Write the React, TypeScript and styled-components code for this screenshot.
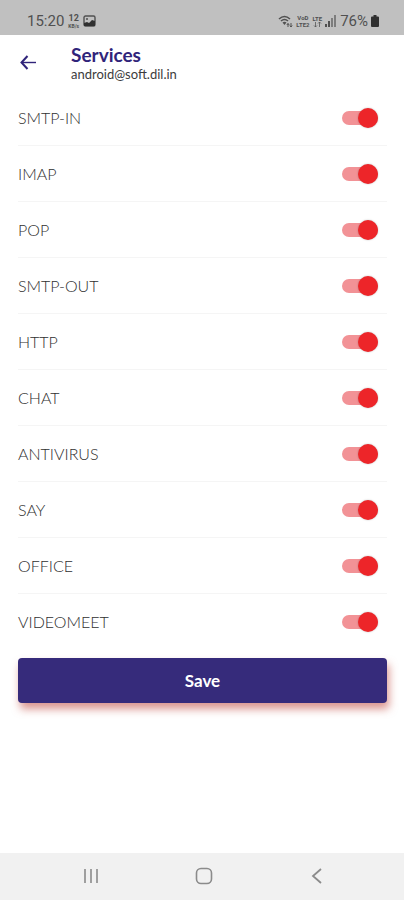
import React, { useState } from "react";
import styled, { createGlobalStyle } from "styled-components";

const GlobalStyle = createGlobalStyle`
  * { box-sizing: border-box; }
  body {
    margin: 0;
    background: #fff;
    font-family: Lato, "Open Sans", sans-serif;
  }
`;

const Screen = styled.div`
  min-height: 100vh;
  display: flex;
  flex-direction: column;
`;

const StatusBar = styled.div`
  height: 35px;
  padding: 7px 25px 0 27px;
  display: flex;
  align-items: center;
  justify-content: space-between;
  background: #c0c0c0;
  color: #505050;
  font-family: Roboto, sans-serif;
  font-size: 15px;
  line-height: 20px;
`;

const StatusGroup = styled.div<{ $gap: number }>`
  display: flex;
  align-items: center;
  gap: ${(p) => p.$gap}px;
`;

const Stacked = styled.span<{ $size: number; $line: number }>`
  display: flex;
  flex-direction: column;
  align-items: center;
  font-size: ${(p) => p.$size}px;
  line-height: ${(p) => p.$line}px;
  font-weight: 700;
`;

const Unit = styled.span`
  font-size: 5px;
  line-height: 6px;
`;

const Header = styled.header`
  height: 55px;
  padding: 0 18px;
  display: flex;
  align-items: center;
  gap: 33px;
`;

const BackButton = styled.button`
  width: 20px;
  height: 20px;
  padding: 0;
  border: 0;
  background: none;
  color: #30247a;
  display: flex;
`;

const Title = styled.h1`
  margin: 0;
  font-size: 19px;
  line-height: 22px;
  font-weight: 700;
  color: #30247a;
`;

const Account = styled.p`
  margin: 0;
  font-size: 13px;
  line-height: 16px;
  color: #3c3c3c;
`;

const Form = styled.form`
  flex: 1;
  padding: 0 17px 24px 18px;
`;

const List = styled.ul`
  margin: 0 0 8px;
  padding: 0;
  list-style: none;
`;

const Row = styled.li`
  height: 56px;
  border-bottom: 1px solid #f5f5f5;

  &:last-child {
    border-bottom-color: transparent;
  }
`;

const RowLabel = styled.label`
  height: 100%;
  padding-right: 9px;
  display: flex;
  align-items: center;
  justify-content: space-between;
  font-size: 16px;
  line-height: 20px;
  font-weight: 300;
  color: #303030;
`;

const Switch = styled.input`
  appearance: none;
  width: 36px;
  height: 14px;
  margin: 0;
  display: flex;
  align-items: center;
  justify-content: flex-start;
  border-radius: 7px;
  background: #c4c4c4;

  &::before {
    content: "";
    flex: none;
    width: 20px;
    height: 20px;
    border-radius: 50%;
    background: #fafafa;
    box-shadow: 0 0 2px rgba(0, 0, 0, 0.25);
  }

  &:checked {
    justify-content: flex-end;
    background: #f29296;
  }

  &:checked::before {
    background: #ed2529;
  }
`;

const SaveButton = styled.button`
  width: 100%;
  height: 45px;
  padding: 0;
  border: 0;
  border-radius: 4px;
  background: #362b7b;
  box-shadow: 2px 6px 8px rgba(190, 64, 52, 0.55);
  color: #fff;
  font-family: inherit;
  font-size: 17px;
  line-height: 20px;
  font-weight: 700;
`;

const NavBar = styled.nav`
  height: 47px;
  padding: 0 31px 2px 34px;
  display: grid;
  grid-template-columns: repeat(3, 1fr);
  background: #f1f1f1;
`;

const NavButton = styled.button`
  padding: 0;
  border: 0;
  background: none;
  color: #8b8b8b;
  display: flex;
  align-items: center;
  justify-content: center;
`;

const services = [
  "SMTP-IN", "IMAP", "POP", "SMTP-OUT", "HTTP",
  "CHAT", "ANTIVIRUS", "SAY", "OFFICE", "VIDEOMEET",
];

const PictureIcon = () => (
  <svg width="13" height="12" viewBox="0 0 13 12" aria-hidden="true">
    <rect x="1" y="1" width="11" height="10" rx="1.5" fill="none" stroke="currentColor" strokeWidth="1.4" />
    <path d="M1 8l3-1 2 1L9 5l3 1v5H1z" fill="#303030" />
    <circle cx="4" cy="4" r="1" fill="currentColor" />
  </svg>
);

const WifiIcon = () => (
  <svg width="15" height="13" viewBox="0 0 15 13" aria-hidden="true" fill="none" stroke="currentColor">
    <path d="M1 4Q6.500 -1 12 4M3 6Q6.500 3 10 6" strokeWidth="1.600" />
    <path d="M4.500 7.500Q6.500 6 8.500 7.500L6.500 10z" fill="currentColor" stroke="none" />
    <path d="M10 12V8.500M8.800 10L10 8.500l1.200 1.500M13 8v4M11.800 10.500L13 12l1.200-1.500" strokeWidth="1" />
  </svg>
);

const DataArrows = () => (
  <svg width="9" height="6" viewBox="0 0 9 6" aria-hidden="true" fill="none" stroke="currentColor">
    <path d="M2.500 0v5M1 3.500L2.500 5 4 3.500M6.500 5V0M5 1.500L6.500 0 8 1.500" opacity=".75" />
  </svg>
);

const SignalIcon = () => (
  <svg width="12" height="12" viewBox="0 0 12 12" aria-hidden="true" fill="currentColor">
    <path d="M0 9h2v3H0zM3 6h2v6H3z" />
    <path d="M6 3h2v9H6zM9 0h2v12H9z" opacity=".6" />
  </svg>
);

const BatteryIcon = () => (
  <svg width="8" height="12" viewBox="0 0 8 12" aria-hidden="true" fill="#303030">
    <path d="M2.500 0h3v1.500H7a1 1 0 0 1 1 1V11a1 1 0 0 1-1 1H1a1 1 0 0 1-1-1V2.500a1 1 0 0 1 1-1h1.500z" />
  </svg>
);

export default function App() {
  const [enabled, setEnabled] = useState<Record<string, boolean>>(
    () => Object.fromEntries(services.map((name) => [name, true])),
  );

  return (
    <Screen>
      <GlobalStyle />
      <StatusBar>
        <StatusGroup $gap={4}>
          <span>15:20</span>
          <Stacked $size={9} $line={10}>
            <span>12</span>
            <Unit>KB/s</Unit>
          </Stacked>
          <PictureIcon />
        </StatusGroup>
        <StatusGroup $gap={3}>
          <WifiIcon />
          <Stacked $size={6} $line={7}>
            <span>VoD</span>
            <span>LTE2</span>
          </Stacked>
          <Stacked $size={6} $line={7}>
            <span>LTE</span>
            <DataArrows />
          </Stacked>
          <SignalIcon />
          <span>76%</span>
          <BatteryIcon />
        </StatusGroup>
      </StatusBar>
      <Header>
        <BackButton type="button" aria-label="Back">
          <svg width="20" height="20" viewBox="0 0 20 20" fill="none" stroke="currentColor">
            <path d="M9.500 3L3.500 9.500l6 6.500" strokeWidth="2" />
            <path d="M4 9.500h14" strokeWidth="1.400" />
          </svg>
        </BackButton>
        <div>
          <Title>Services</Title>
          <Account>android@soft.dil.in</Account>
        </div>
      </Header>
      <Form onSubmit={(event) => event.preventDefault()}>
        <List>
          {services.map((name) => (
            <Row key={name}>
              <RowLabel>
                {name}
                <Switch
                  type="checkbox"
                  role="switch"
                  checked={enabled[name]}
                  onChange={(event) => setEnabled({ ...enabled, [name]: event.target.checked })}
                />
              </RowLabel>
            </Row>
          ))}
        </List>
        <SaveButton type="submit">Save</SaveButton>
      </Form>
      <NavBar>
        <NavButton type="button" aria-label="Recent apps">
          <svg width="18" height="18" viewBox="0 0 18 18" fill="none" stroke="currentColor" strokeWidth="1.600">
            <path d="M3 2v14M9 2v14M15 2v14" />
          </svg>
        </NavButton>
        <NavButton type="button" aria-label="Home">
          <svg width="18" height="18" viewBox="0 0 18 18" fill="none" stroke="currentColor" strokeWidth="1.600">
            <rect x="1.500" y="1.500" width="15" height="15" rx="4.500" />
          </svg>
        </NavButton>
        <NavButton type="button" aria-label="Back">
          <svg width="18" height="18" viewBox="0 0 18 18" fill="none" stroke="currentColor" strokeWidth="1.800">
            <path d="M13 2L5 9l8 7" />
          </svg>
        </NavButton>
      </NavBar>
    </Screen>
  );
}
